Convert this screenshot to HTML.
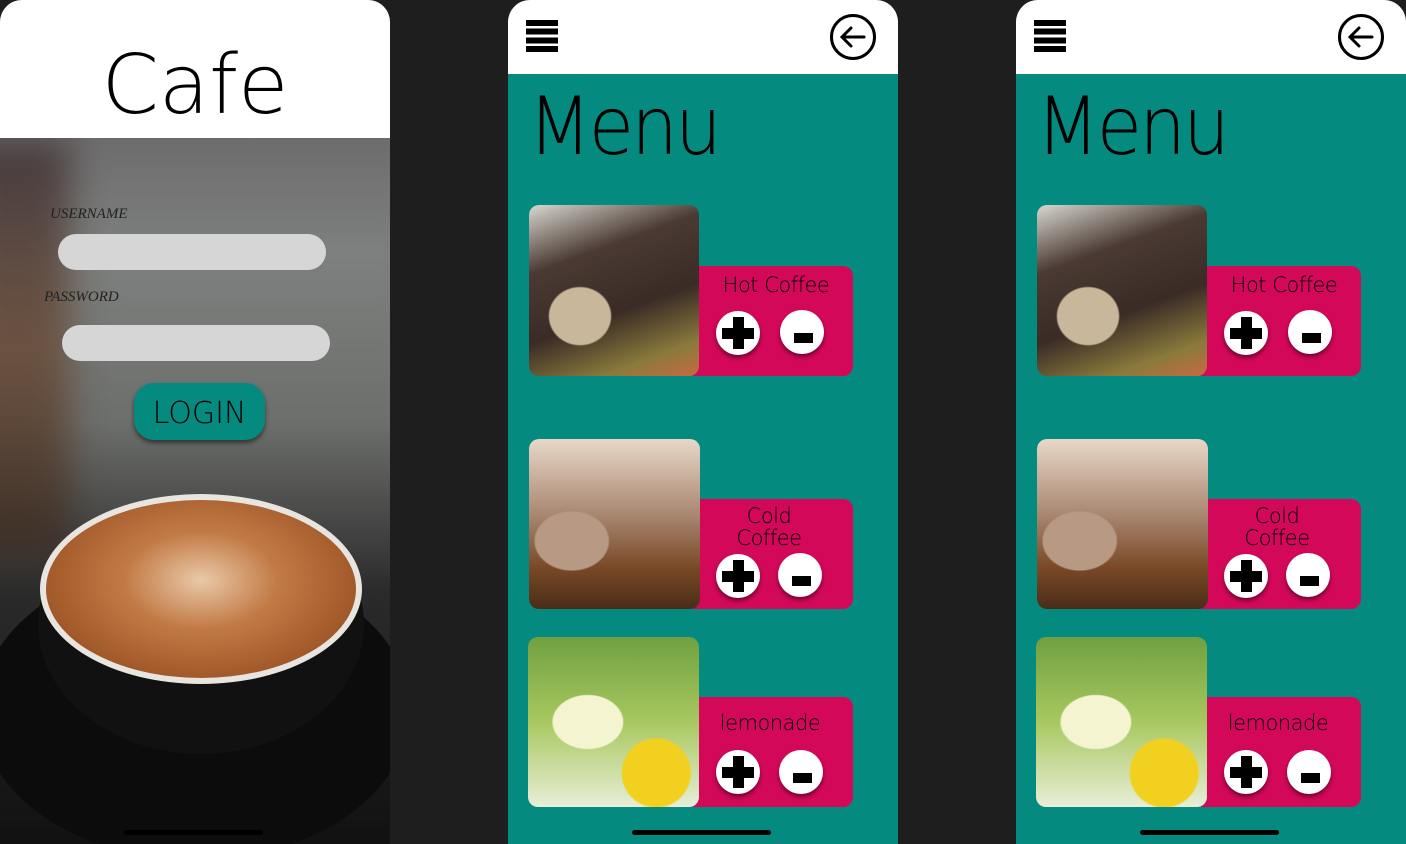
<!DOCTYPE html>
<html><head><style>
*{margin:0;padding:0;box-sizing:border-box}
body{width:1406px;height:844px;background:#1e1e1e;position:relative;overflow:hidden;font-family:"Liberation Sans",sans-serif}
.p{position:absolute;top:0;width:390px;height:844px;border-radius:22px 22px 0 0;overflow:hidden}
.a{position:absolute}
.menu{background:#058a80}
.hdr{position:absolute;left:0;top:0;width:390px;height:74px;background:#fff}
.hb{position:absolute;left:18px;top:20px;width:32px;height:32px;background:repeating-linear-gradient(#000 0 6px,#fff 6px 8.7px)}
.bk{position:absolute;left:322px;top:14px;width:46px;height:46px;border:3px solid #000;border-radius:50%}
.ttl{position:absolute;left:20px;top:80px;font-size:80px;font-family:"DejaVu Sans",sans-serif;font-weight:200;letter-spacing:-3px;color:#000;transform:scaleX(0.92);transform-origin:left}
.img{position:absolute;border-radius:10px;overflow:hidden}
.pk{position:absolute;background:#d30858;border-radius:0 10px 10px 0}
.nm{position:absolute;width:154px;text-align:center;font-size:21px;font-family:"DejaVu Sans",sans-serif;font-weight:200;color:#000;line-height:22px;letter-spacing:-0.5px}
.btn{position:absolute;width:44px;height:44px;border-radius:50%;background:#fff;box-shadow:0 3px 4px rgba(0,0,0,.45)}
.pl:before{content:"";position:absolute;left:6px;top:17px;width:32px;height:11px;background:#000}
.pl:after{content:"";position:absolute;left:16.5px;top:6px;width:11px;height:32px;background:#000}
.mn:before{content:"";position:absolute;left:14px;top:23px;width:19px;height:10px;background:#000}
.home{position:absolute;left:124px;top:830px;width:139px;height:5px;background:#000;border-radius:3px}
</style></head><body>

<div class="p" style="left:0;background:linear-gradient(180deg,#5a5558 0%,#7d807e 30%,#6d6f6c 50%,#2b2b2b 70%,#111 100%)">
  <div class="a" style="left:-40px;top:138px;width:110px;height:420px;background:linear-gradient(180deg,#3c2f33,#6b4a35,#3a2a20);filter:blur(18px);opacity:.8"></div>
  <div class="a" style="left:-20px;top:560px;width:430px;height:300px;border-radius:50%;background:#0c0c0c"></div>
  <div class="a" style="left:38px;top:494px;width:326px;height:260px;border-radius:50%;background:#111"></div>
  <div class="a" style="left:40px;top:494px;width:322px;height:190px;border-radius:50%;background:#e8e4df"></div>
  <div class="a" style="left:46px;top:500px;width:310px;height:178px;border-radius:50%;background:radial-gradient(ellipse at 50% 45%,#e9c9a8 0%,#c27a45 35%,#a35a2a 70%,#7a3e18 100%)"></div>
  <div class="a" style="left:0;top:0;width:390px;height:138px;background:#fff"></div>
  <div class="a" style="left:0;top:38px;width:390px;text-align:center;font-size:82px;font-family:'DejaVu Sans',sans-serif;font-weight:200;color:#000;letter-spacing:0px">Cafe</div>
  <div class="a" style="left:50px;top:206px;font-size:15px;font-style:italic;font-family:'Liberation Serif',serif;color:#222">USERNAME</div>
  <div class="a" style="left:58px;top:234px;width:268px;height:36px;border-radius:18px;background:#d6d6d6"></div>
  <div class="a" style="left:44px;top:289px;font-size:15px;font-style:italic;font-family:'Liberation Serif',serif;color:#222">PASSWORD</div>
  <div class="a" style="left:62px;top:325px;width:268px;height:36px;border-radius:18px;background:#d6d6d6"></div>
  <div class="a" style="left:134px;top:383px;width:131px;height:57px;border-radius:20px;background:#058a80;box-shadow:0 3px 5px rgba(0,0,0,.5);text-align:center;line-height:62px;font-size:30px;font-family:'DejaVu Sans',sans-serif;font-weight:200;color:#000">LOGIN</div>
  <div class="home" style="background:#000"></div>
</div>

<div class="p menu" style="left:508px">
  <div class="hdr"></div><div class="hb"></div><div class="bk"><svg width="40" height="40" viewBox="0 0 40 40" style="position:absolute;left:0;top:0"><path d="M31 20H10M18 11l-9 9 9 9" fill="none" stroke="#000" stroke-width="3" stroke-linecap="round"/></svg></div>
  <div class="ttl">Menu</div>
  <div class="pk" style="left:185px;top:266px;width:160px;height:110px"></div>
  <div class="img" style="left:21px;top:205px;width:170px;height:171px;background:radial-gradient(ellipse at 30% 65%,#c9b79c 0 18%,transparent 19%),linear-gradient(160deg,#d8d8d0 0%,#4a3a33 30%,#3a2b26 60%,#8a7a3c 85%,#c76a40 100%)"></div>
  <div class="nm" style="left:191px;top:274px">Hot Coffee</div>
  <div class="btn pl" style="left:208px;top:311px"></div><div class="btn mn" style="left:272px;top:310px"></div>
  <div class="pk" style="left:185px;top:499px;width:160px;height:110px"></div>
  <div class="img" style="left:21px;top:439px;width:171px;height:170px;background:radial-gradient(ellipse at 25% 60%,#b89a84 0 20%,transparent 21%),linear-gradient(180deg,#e8d8c8 0%,#a88670 45%,#7a4a28 75%,#4a2c18 100%)"></div>
  <div class="nm" style="left:184px;top:505px">Cold<br>Coffee</div>
  <div class="btn pl" style="left:208px;top:554px"></div><div class="btn mn" style="left:270px;top:553px"></div>
  <div class="pk" style="left:185px;top:697px;width:160px;height:110px"></div>
  <div class="img" style="left:20px;top:637px;width:171px;height:170px;background:radial-gradient(ellipse at 35% 50%,#f4f4d0 0 22%,transparent 23%),radial-gradient(circle at 75% 80%,#f2d020 0 18%,transparent 19%),linear-gradient(180deg,#6fa040,#a8c860 50%,#e8eed8 100%)"></div>
  <div class="nm" style="left:185px;top:712px">lemonade</div>
  <div class="btn pl" style="left:208px;top:750px"></div><div class="btn mn" style="left:271px;top:750px"></div>
  <div class="home"></div>
</div>

<div class="p menu" style="left:1016px">
  <div class="hdr"></div><div class="hb"></div><div class="bk"><svg width="40" height="40" viewBox="0 0 40 40" style="position:absolute;left:0;top:0"><path d="M31 20H10M18 11l-9 9 9 9" fill="none" stroke="#000" stroke-width="3" stroke-linecap="round"/></svg></div>
  <div class="ttl">Menu</div>
  <div class="pk" style="left:185px;top:266px;width:160px;height:110px"></div>
  <div class="img" style="left:21px;top:205px;width:170px;height:171px;background:radial-gradient(ellipse at 30% 65%,#c9b79c 0 18%,transparent 19%),linear-gradient(160deg,#d8d8d0 0%,#4a3a33 30%,#3a2b26 60%,#8a7a3c 85%,#c76a40 100%)"></div>
  <div class="nm" style="left:191px;top:274px">Hot Coffee</div>
  <div class="btn pl" style="left:208px;top:311px"></div><div class="btn mn" style="left:272px;top:310px"></div>
  <div class="pk" style="left:185px;top:499px;width:160px;height:110px"></div>
  <div class="img" style="left:21px;top:439px;width:171px;height:170px;background:radial-gradient(ellipse at 25% 60%,#b89a84 0 20%,transparent 21%),linear-gradient(180deg,#e8d8c8 0%,#a88670 45%,#7a4a28 75%,#4a2c18 100%)"></div>
  <div class="nm" style="left:184px;top:505px">Cold<br>Coffee</div>
  <div class="btn pl" style="left:208px;top:554px"></div><div class="btn mn" style="left:270px;top:553px"></div>
  <div class="pk" style="left:185px;top:697px;width:160px;height:110px"></div>
  <div class="img" style="left:20px;top:637px;width:171px;height:170px;background:radial-gradient(ellipse at 35% 50%,#f4f4d0 0 22%,transparent 23%),radial-gradient(circle at 75% 80%,#f2d020 0 18%,transparent 19%),linear-gradient(180deg,#6fa040,#a8c860 50%,#e8eed8 100%)"></div>
  <div class="nm" style="left:185px;top:712px">lemonade</div>
  <div class="btn pl" style="left:208px;top:750px"></div><div class="btn mn" style="left:271px;top:750px"></div>
  <div class="home"></div>
</div>
</body></html>
